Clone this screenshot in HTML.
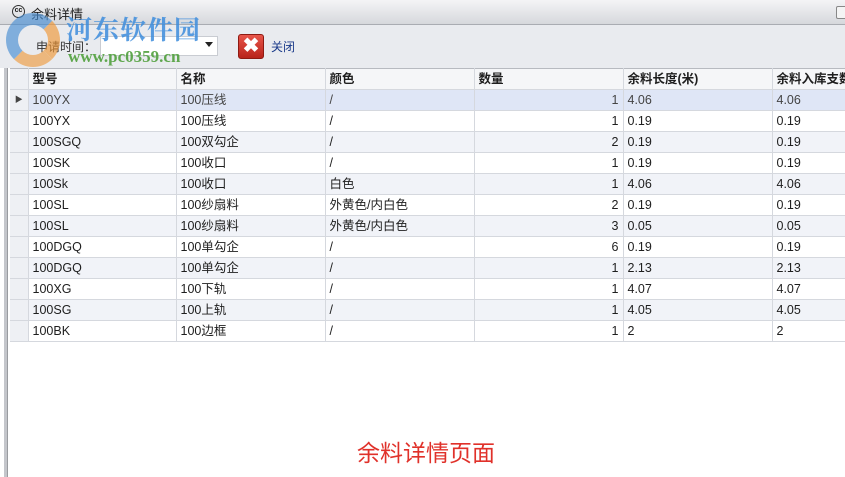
<!DOCTYPE html><html><head><meta charset="utf-8"><style>
*{margin:0;padding:0;box-sizing:border-box}
body{width:845px;height:477px;overflow:hidden;background:#fff;font-family:"Liberation Sans","Noto Sans CJK SC",sans-serif;font-size:12px;color:#1e1e1e;position:relative}
.title{position:absolute;left:0;top:0;width:845px;height:25px;background:linear-gradient(#f4f4f6,#d6d8dc);border-bottom:1px solid #a9acb2}
.tb{position:absolute;left:0;top:25px;width:845px;height:43px;background:#e9ebef}
.lb{position:absolute;left:4px;top:68px;width:4px;height:409px;background:#c4c6cb;border-right:1px solid #9a9ca0}
table{position:absolute;left:10px;top:68px;border-collapse:collapse;table-layout:fixed;width:900px}
td{height:21px;line-height:20px;border-right:1px solid #d5d8de;border-bottom:1px solid #d5d8de;padding:0 4px;white-space:nowrap;overflow:hidden;font-size:12.5px;vertical-align:middle}
td span{display:inline-block;vertical-align:top;line-height:20px}
tr.h td{background:#f5f6f8;font-weight:bold;border-top:1px solid #b7bac0}
tr.s td{background:#dfe6f6;color:#444}
tr.a td{background:#f1f3f8}
td.rh{background:#eef0f4!important;padding:0}
td.n{text-align:right}
</style></head><body>
<div class="title"><span style="position:absolute;left:12px;top:5px;width:13px;height:13px;border:1.5px solid #333;border-radius:50%;font-size:7px;line-height:10px;text-align:center;font-weight:bold">cc</span><span style="position:absolute;left:31px;top:4px;font-size:13px">余料详情</span><span style="position:absolute;left:836px;top:6px;width:12px;height:13px;border:1px solid #888;border-radius:2px;background:#f4f4f4"></span></div>
<div class="tb">
<span style="position:absolute;left:36px;top:13px;color:#333">申请时间：</span>
<div style="position:absolute;left:100px;top:11px;width:118px;height:20px;background:#fff;border:1px solid #c9ccd2"><span style="position:absolute;right:4px;top:5px;border-left:4px solid transparent;border-right:4px solid transparent;border-top:5px solid #222"></span></div>
<div style="position:absolute;left:238px;top:9px;width:26px;height:25px;background:linear-gradient(#e8554a,#b8231a);border:1px solid #8e1a12;border-radius:3px;color:#fff;font-weight:bold;font-size:20px;line-height:23px;text-align:center">✖</div>
<span style="position:absolute;left:271px;top:13px;color:#1a3a8a">关闭</span>
</div>
<div style="position:absolute;left:6px;top:13px;width:54px;height:54px;border-radius:50%;border:12px solid rgba(70,140,210,.75);border-right-color:rgba(240,150,50,.75);border-bottom-color:rgba(240,150,50,.7);opacity:.85"></div>
<span style="position:absolute;left:66px;top:10px;font-size:26px;font-weight:bold;color:rgba(60,140,220,.85);font-family:'Noto Serif CJK SC',serif;letter-spacing:1px">河东软件园</span>
<span style="position:absolute;left:68px;top:47px;font-size:17px;font-weight:bold;color:rgba(80,160,60,.9);font-family:'Liberation Serif',serif">www.pc0359.cn</span>
<div class="lb"></div>
<table>
<colgroup><col style="width:18px"><col style="width:148px"><col style="width:149px"><col style="width:149px"><col style="width:149px"><col style="width:149px"><col style="width:149px"></colgroup>
<tr class="h"><td class="rh"></td><td>型号</td><td>名称</td><td>颜色</td><td>数量</td><td>余料长度(米)</td><td>余料入库支数</td></tr>
<tr class="s"><td class="rh" style="font-size:8px;text-align:center">▶</td><td>100YX</td><td>100压线</td><td>/</td><td class="n">1</td><td>4.06</td><td>4.06</td></tr>
<tr><td class="rh"></td><td>100YX</td><td>100压线</td><td>/</td><td class="n">1</td><td>0.19</td><td>0.19</td></tr>
<tr class="a"><td class="rh"></td><td>100SGQ</td><td>100双勾企</td><td>/</td><td class="n">2</td><td>0.19</td><td>0.19</td></tr>
<tr><td class="rh"></td><td>100SK</td><td>100收口</td><td>/</td><td class="n">1</td><td>0.19</td><td>0.19</td></tr>
<tr class="a"><td class="rh"></td><td>100Sk</td><td>100收口</td><td>白色</td><td class="n">1</td><td>4.06</td><td>4.06</td></tr>
<tr><td class="rh"></td><td>100SL</td><td>100纱扇料</td><td>外黄色/内白色</td><td class="n">2</td><td>0.19</td><td>0.19</td></tr>
<tr class="a"><td class="rh"></td><td>100SL</td><td>100纱扇料</td><td>外黄色/内白色</td><td class="n">3</td><td>0.05</td><td>0.05</td></tr>
<tr><td class="rh"></td><td>100DGQ</td><td>100单勾企</td><td>/</td><td class="n">6</td><td>0.19</td><td>0.19</td></tr>
<tr class="a"><td class="rh"></td><td>100DGQ</td><td>100单勾企</td><td>/</td><td class="n">1</td><td>2.13</td><td>2.13</td></tr>
<tr><td class="rh"></td><td>100XG</td><td>100下轨</td><td>/</td><td class="n">1</td><td>4.07</td><td>4.07</td></tr>
<tr class="a"><td class="rh"></td><td>100SG</td><td>100上轨</td><td>/</td><td class="n">1</td><td>4.05</td><td>4.05</td></tr>
<tr><td class="rh"></td><td>100BK</td><td>100边框</td><td>/</td><td class="n">1</td><td>2</td><td>2</td></tr>
</table>
<span style="position:absolute;left:357px;top:434px;font-size:23px;color:#e0312a">余料详情页面</span>
</body></html>
